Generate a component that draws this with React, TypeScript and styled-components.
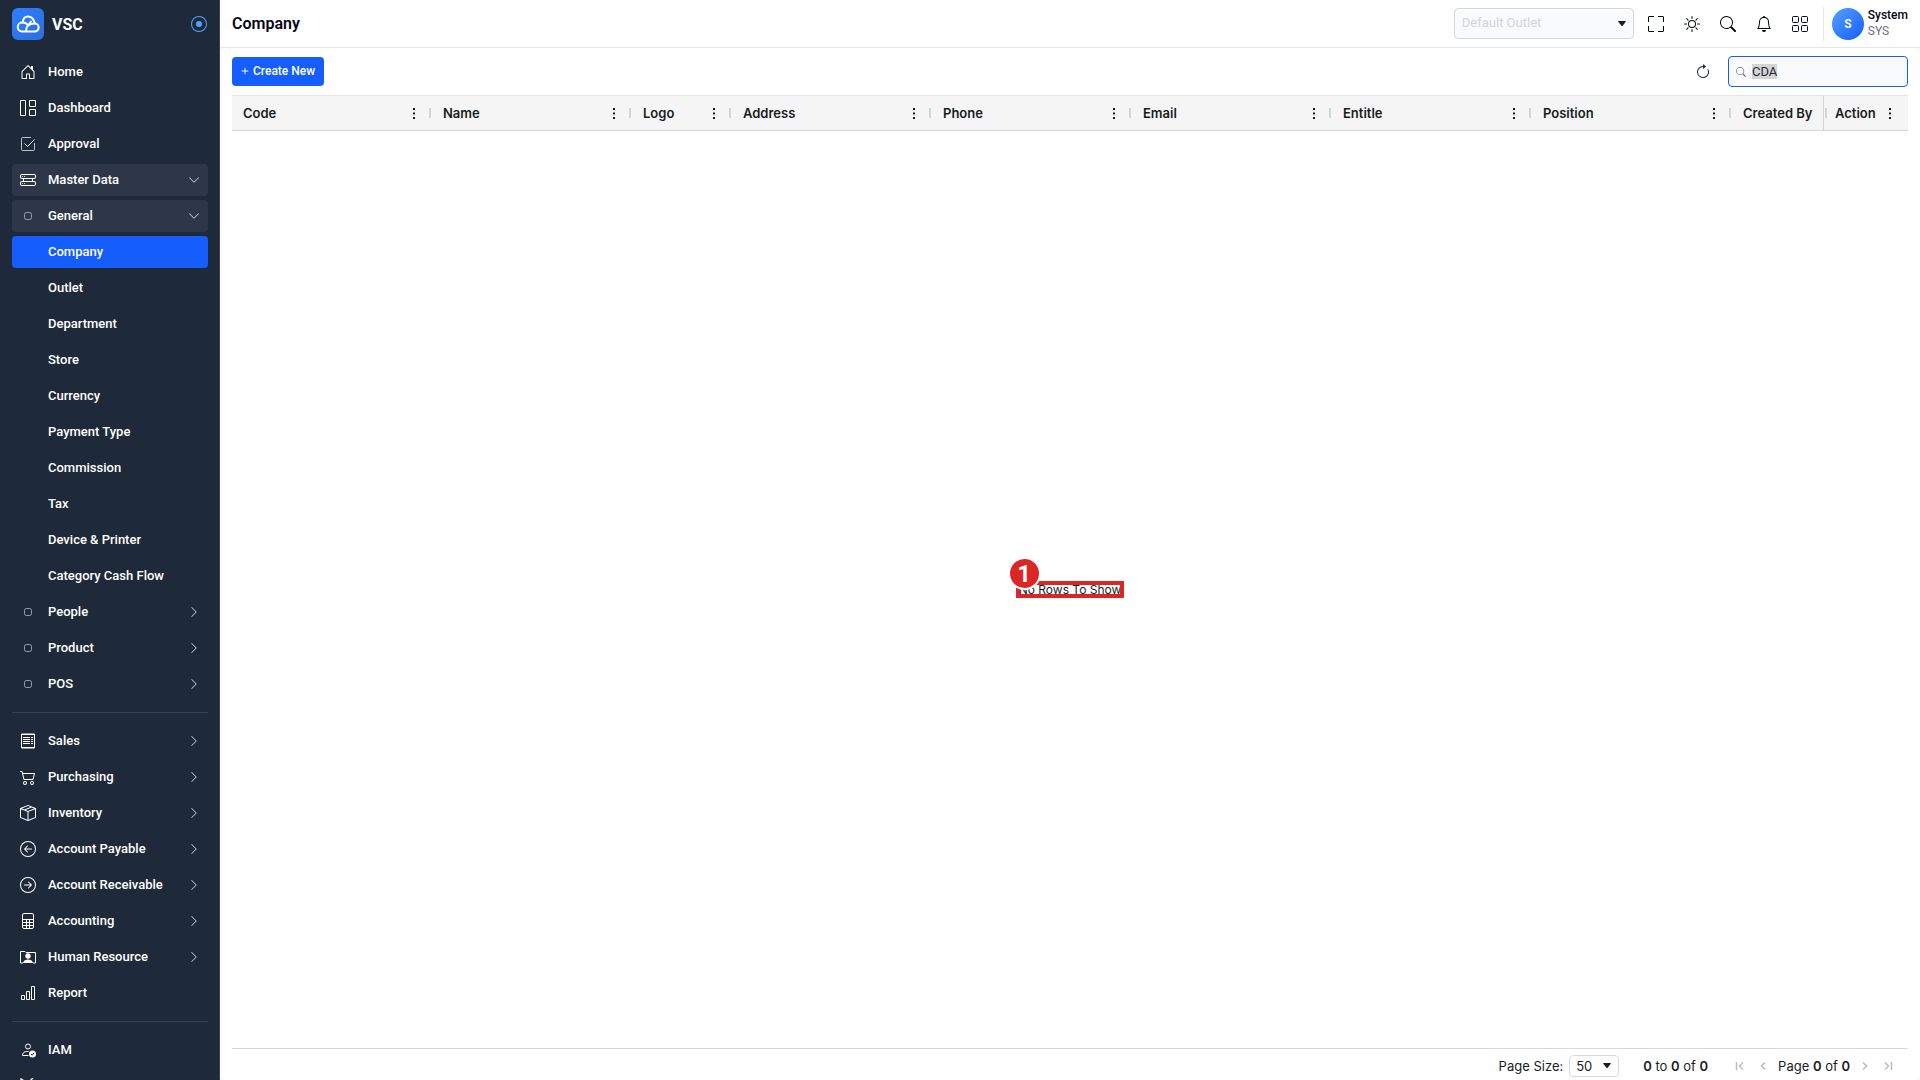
import React, { useEffect, useRef } from "react";
import styled, { createGlobalStyle } from "styled-components";
import {
  BsHouseDoor, BsHddRack, BsCart2, BsBoxSeam, BsArrowLeftCircle,
  BsArrowRightCircle, BsTools, BsChevronDown, BsChevronRight,
  BsSun, BsSearch, BsBell, BsArrowClockwise, BsRecordCircle, BsPlus,
} from "react-icons/bs";

const GlobalStyle = createGlobalStyle`
  *, *::before, *::after { box-sizing: border-box; }
  body { margin: 0; overflow: hidden; font-family: Roboto, sans-serif; font-size: 13px; color: #030712; }
  button, input, select { font: inherit; color: inherit; }
  button { border: 0; padding: 0; background: none; cursor: pointer; }
`;

const Shell = styled.div`
  display: flex;
  height: 100vh;
  background: #f3f4f6;
`;

/* Sidebar */
const Sidebar = styled.aside`
  flex: none;
  width: 220px;
  padding: 8px 11px 0 12px;
  background: #1e2939;
  border-right: 1px solid #364153;
  color: #fff;
  overflow: hidden;
`;
const Brand = styled.div`
  display: flex;
  align-items: center;
  height: 32px;
  margin-bottom: 16px;
`;
const LogoBox = styled.span`
  display: flex;
  align-items: center;
  justify-content: center;
  width: 32px;
  height: 32px;
  border-radius: 6px;
  background: linear-gradient(135deg, #2b7fff, #2f6fdc);
`;
const BrandName = styled.span`
  flex: 1;
  margin-left: 8px;
  font-size: 16px;
  font-weight: 700;
`;
const PinButton = styled.button`
  display: flex;
  margin-right: 1px;
  color: #51a2ff;
`;
const Menu = styled.ul`
  display: flex;
  flex-direction: column;
  gap: 4px;
  margin: 0;
  padding: 0;
  list-style: none;
`;
const MenuLink = styled.a<{ $state?: "open" | "active" }>`
  display: flex;
  align-items: center;
  height: 32px;
  padding: 0 8px;
  border-radius: 4px;
  color: #fff;
  font-weight: 500;
  text-decoration: none;
  background: ${(p) => (p.$state === "active" ? "#155dfc" : p.$state === "open" ? "#2d3748" : "transparent")};
`;
const IconSlot = styled.span`
  display: flex;
  align-items: center;
  justify-content: center;
  width: 16px;
  margin-right: 12px;
`;
const MenuLabel = styled.span`
  flex: 1;
  padding-bottom: 2px;
  white-space: nowrap;
`;
const Arrow = styled.span`
  display: flex;
  color: #d1d5dc;
`;
const Divider = styled.hr`
  height: 1px;
  margin: 12px 0;
  border: 0;
  background: #364153;
`;

/* Header */
const Page = styled.div`
  flex: 1;
  min-width: 0;
  display: flex;
  flex-direction: column;
`;
const Header = styled.header`
  display: flex;
  align-items: center;
  height: 48px;
  padding: 0 12px;
  background: #fff;
  border-bottom: 1px solid #e5e7eb;
`;
const Title = styled.h1`
  flex: 1;
  margin: 0;
  font-size: 16px;
  font-weight: 600;
`;
const SelectWrap = styled.div<{ $small?: boolean }>`
  display: grid;
  align-items: center;
  width: ${(p) => (p.$small ? 50 : 180)}px;
  & > * { grid-area: 1 / 1; }
  & > svg { justify-self: end; margin-right: 8px; pointer-events: none; }
`;
const OutletSelect = styled.select`
  appearance: none;
  width: 100%;
  height: 31px;
  padding: 0 7px 2px;
  border: 1px solid #d1d5dc;
  border-radius: 4px;
  background: #f9fafb;
  color: #d1d5dc;
  opacity: 1;
`;
const HeaderActions = styled.div`
  display: flex;
  gap: 20px;
  margin-left: 14px;
`;
const IconButton = styled.button`
  display: flex;
`;
const User = styled.div`
  display: flex;
  align-items: center;
  gap: 4px;
  margin-left: 15px;
  padding-left: 8px;
  border-left: 1px solid #e5e7eb;
`;
const Avatar = styled.span`
  display: flex;
  align-items: center;
  justify-content: center;
  width: 32px;
  height: 32px;
  border-radius: 50%;
  background: linear-gradient(135deg, #51a2ff, #155dfc);
  color: #fff;
  font-size: 12px;
  font-weight: 600;
`;
const UserText = styled.div`
  display: flex;
  flex-direction: column;
  padding-bottom: 2px;
  font-size: 12px;
  line-height: 16px;
`;
const UserName = styled.span`
  font-weight: 500;
`;
const UserRole = styled.span`
  color: #6a7282;
`;

/* Content */
const Content = styled.main`
  flex: 1;
  min-height: 0;
  display: flex;
  flex-direction: column;
  padding: 0 12px;
  border-radius: 4px;
  background: #fff;
`;
const Toolbar = styled.div`
  display: flex;
  align-items: center;
  justify-content: space-between;
  height: 47px;
`;
const CreateButton = styled.button`
  display: flex;
  align-items: center;
  gap: 1px;
  height: 29px;
  padding: 0 9px 1px 6px;
  border-radius: 4px;
  background: #155dfc;
  color: #fff;
  font-size: 12px;
  font-weight: 500;
`;
const ToolGroup = styled.div`
  display: flex;
  align-items: center;
  gap: 17px;
  color: #1e2939;
`;
const SearchBox = styled.label`
  display: flex;
  align-items: center;
  gap: 6px;
  width: 180px;
  height: 31px;
  padding: 0 7px;
  border: 1px solid #155dfc;
  border-radius: 4px;
  background: #f9fafb;
  color: #6a7282;
`;
const SearchInput = styled.input`
  flex: 1;
  min-width: 0;
  padding: 0;
  border: 0;
  outline: 0;
  background: transparent;
  color: #1e2939;
  &::selection { background: #d4d4d4; color: #1e2939; }
`;

/* Grid */
const Grid = styled.section`
  flex: 1;
  min-height: 0;
  display: flex;
  flex-direction: column;
  font-family: Inter, sans-serif;
  color: #181d1f;
`;
const Scroller = styled.div`
  overflow: hidden;
`;
const Table = styled.table`
  width: max-content;
  table-layout: fixed;
  border-collapse: separate;
  border-spacing: 0;
`;
const Th = styled.th<{ $width: number; $pinned?: boolean }>`
  position: ${(p) => (p.$pinned ? "sticky" : "static")};
  right: 0;
  width: ${(p) => p.$width}px;
  min-width: ${(p) => p.$width}px;
  height: 36px;
  padding: 0;
  border: solid #d5d5d5;
  border-width: 1px 0 1px ${(p) => (p.$pinned ? 1 : 0)}px;
  border-top-color: #e5e7eb;
  background: #f5f5f5;
  font-weight: 600;
  text-align: left;
`;
const ThInner = styled.div<{ $pinned?: boolean }>`
  display: flex;
  flex-direction: ${(p) => (p.$pinned ? "row-reverse" : "row")};
  align-items: center;
  padding: 0 ${(p) => (p.$pinned ? "16px 0 1px" : "1px 0 11px")};
`;
const ThLabel = styled.span`
  flex: 1;
`;
const Handle = styled.span<{ $pinned?: boolean }>`
  width: 2px;
  height: 10px;
  margin: ${(p) => (p.$pinned ? "0 8px 0 0" : "0 0 0 13px")};
  background: #d5d5d5;
`;
const Empty = styled.div`
  flex: 1;
  display: flex;
  align-items: center;
  justify-content: center;
`;
const EmptyText = styled.span`
  position: relative;
  padding: 0 3px;
  font-size: 12px;
  line-height: 17px;
`;
const Marker = styled.span`
  position: absolute;
  inset: 0;
  border: 4px solid #dc2626;
`;
const Badge = styled.span`
  position: absolute;
  left: -8px;
  top: -24px;
  display: flex;
  align-items: center;
  justify-content: center;
  width: 33px;
  height: 33px;
  border: 2px solid #fff;
  border-radius: 50%;
  background: #dc2626;
  color: #fff;
  font: bold 24px Roboto, sans-serif;
`;
const Pager = styled.footer`
  display: flex;
  align-items: center;
  justify-content: flex-end;
  height: 32px;
  padding: 2px 12px 0 0;
  border-top: 1px solid #d9d9d9;
  b { font-weight: 600; }
`;
const SizeLabel = styled.label`
  margin-right: 6px;
`;
const SizeSelect = styled.select`
  appearance: none;
  width: 100%;
  height: 22px;
  padding: 0 6px;
  border: 1px solid #d9d9d9;
  border-radius: 4px;
  background: #fff;
`;
const Summary = styled.span`
  margin: 0 24px;
`;
const PageButtons = styled.div`
  display: flex;
  align-items: center;
  gap: 7px;
  color: #b9bbbc;
`;
const PageText = styled.span`
  color: #181d1f;
`;

const Caret = () => (
  <svg width="8" height="5" viewBox="0 0 8 5" fill="#181d1f" aria-hidden="true">
    <path d="M.6 0h6.8q.8 0 .3.7L4.6 4.7q-.6.6-1.2 0L.3.7Q-.2 0 .6 0z" />
  </svg>
);

const LogoIcon = () => (
  <svg width="24" height="18" viewBox="0 0 24 18" fill="none" stroke="#fff" strokeWidth="2" strokeLinecap="round" strokeLinejoin="round">
    <path d="M6 16.500h12.500a4 4 0 0 0 .3-8C18 5 16.500 1.500 12 1.500 9 1.500 7 3.500 6.500 7.500a4.500 4.500 0 0 0-.5 9z" />
    <path d="M6.500 7.500c2.500-.2 4.500 1 5.500 3.200M10 16c0-4.500 3-7.500 8.500-7.500M12.300 10 15 6.500" />
  </svg>
);

const DashboardIcon = () => (
  <svg width="16" height="16" viewBox="0 0 16 16" fill="none" stroke="currentColor" strokeLinejoin="round">
    <path d="M.5.5h5v15h-5zM9.500.5h6v6h-6zM9.500 9.500h6v6h-6z" />
  </svg>
);
const ApprovalIcon = () => (
  <svg width="16" height="16" viewBox="0 0 16 16" fill="none" stroke="currentColor">
    <path d="M11 1.500H2.500q-1 0-1 1v11q0 1 1 1h11q1 0 1-1V7" strokeOpacity=".7" />
    <path d="m4.500 7.500 3 3 7-7" />
  </svg>
);
const SalesIcon = () => (
  <svg width="16" height="16" viewBox="0 0 16 16" fill="none" stroke="currentColor">
    <path d="M1.500 1v14h13V1zM1 1.500h14M1 14.500h14M3 4.500h7M3 6.500h7M3 8.500h7M3 10.500h7M11 4.500h2M11 6.500h2M11 8.500h2M11 10.500h2" />
  </svg>
);
const CalculatorIcon = () => (
  <svg width="16" height="16" viewBox="0 0 16 16" fill="none" stroke="currentColor">
    <rect x="2.500" y=".5" width="11" height="15" rx="1.500" />
    <path d="M2.500 6.500h11M2.500 9.500h11M2.500 12.500h11M6.500 6.500v9M9.500 6.500v9" />
  </svg>
);
const HumanIcon = () => (
  <svg width="16" height="16" viewBox="0 0 16 16" fill="currentColor">
    <circle cx="8" cy="7" r="2.700" />
    <path d="M3 14c.5-2.500 2.500-3.500 5-3.500s4.500 1 5 3.500z" />
    <path d="M3 14H.5V2.500H5l1 1h9.500V14H13" fill="none" stroke="currentColor" />
  </svg>
);
const ReportIcon = () => (
  <svg width="16" height="16" viewBox="0 0 16 16" fill="none" stroke="currentColor" strokeLinejoin="round">
    <path d="M1.500 10.500h3v4h-3zM6.500 6.500h3v8h-3zM11.500 1.500h3v13h-3z" />
  </svg>
);
const IamIcon = () => (
  <svg width="16" height="16" viewBox="0 0 16 16" fill="none" stroke="currentColor">
    <circle cx="8" cy="4.500" r="2.500" />
    <path d="M8.500 13.500H2.500c0-2.500 1.800-4 4-4h2" />
    <circle cx="12.500" cy="12" r="3.500" fill="currentColor" stroke="none" />
    <path d="m11 12 1.200 1.200 2-2.400" stroke="#1e2939" />
  </svg>
);
const DotIcon = () => (
  <svg width="8" height="8" viewBox="0 0 8 8" fill="none" stroke="#99a1af">
    <rect x=".5" y=".5" width="7" height="7" rx="2" />
  </svg>
);
const FullscreenIcon = () => (
  <svg width="16" height="16" viewBox="0 0 16 16" fill="none" stroke="currentColor">
    <path d="M.5 6V1q0-.5.5-.5h5M10 .5h5q.5 0 .5.5v5M15.500 10v5q0 .5-.5.5h-5M6 15.500H1q-.5 0-.5-.5v-5" />
  </svg>
);
const AppsIcon = () => (
  <svg width="16" height="16" viewBox="0 0 16 16" fill="none" stroke="currentColor">
    <rect x=".5" y=".5" width="6" height="6" rx="1" />
    <rect x="9.500" y=".5" width="6" height="6" rx="1" />
    <rect x=".5" y="9.500" width="6" height="6" rx="1" />
    <rect x="9.500" y="9.500" width="6" height="6" rx="1" />
  </svg>
);
const KebabIcon = () => (
  <svg width="3" height="11" viewBox="0 0 3 11" fill="#181d1f" aria-hidden="true">
    <path d="M0 0h2v2H0zM0 4.500h2v2H0zM0 9h2v2H0z" />
  </svg>
);
const PageIcon = ({ d }: { d: string }) => (
  <svg width="16" height="16" viewBox="0 0 16 16" fill="none" stroke="currentColor" strokeWidth="1.500">
    <path d={d} />
  </svg>
);

type Item = { label?: string; name?: string; icon?: React.ReactNode; arrow?: "right" | "down"; state?: "open" | "active" };

const groups: Item[][] = [
  [
    { label: "Home", icon: <BsHouseDoor size={16} /> },
    { label: "Dashboard", icon: <DashboardIcon /> },
    { label: "Approval", icon: <ApprovalIcon /> },
    { label: "Master Data", icon: <BsHddRack size={16} />, arrow: "down", state: "open" },
    { label: "General", icon: <DotIcon />, arrow: "down", state: "open" },
    { label: "Company", state: "active" },
    ...["Outlet", "Department", "Store", "Currency", "Payment Type", "Commission", "Tax", "Device & Printer", "Category Cash Flow"].map((label) => ({ label })),
    { label: "People", icon: <DotIcon />, arrow: "right" },
    { label: "Product", icon: <DotIcon />, arrow: "right" },
    { label: "POS", icon: <DotIcon />, arrow: "right" },
  ],
  [
    { label: "Sales", icon: <SalesIcon />, arrow: "right" },
    { label: "Purchasing", icon: <BsCart2 size={16} />, arrow: "right" },
    { label: "Inventory", icon: <BsBoxSeam size={16} />, arrow: "right" },
    { label: "Account Payable", icon: <BsArrowLeftCircle size={16} />, arrow: "right" },
    { label: "Account Receivable", icon: <BsArrowRightCircle size={16} />, arrow: "right" },
    { label: "Accounting", icon: <CalculatorIcon />, arrow: "right" },
    { label: "Human Resource", icon: <HumanIcon />, arrow: "right" },
    { label: "Report", icon: <ReportIcon /> },
  ],
  [
    { label: "IAM", icon: <IamIcon /> },
    { name: "Tools", icon: <BsTools size={16} /> },
  ],
];

const columns = [
  { label: "Code", width: 200 },
  { label: "Name", width: 200 },
  { label: "Logo", width: 100 },
  { label: "Address", width: 200 },
  { label: "Phone", width: 200 },
  { label: "Email", width: 200 },
  { label: "Entitle", width: 200 },
  { label: "Position", width: 200 },
  { label: "Created By", width: 200 },
];

export default function App() {
  const search = useRef<HTMLInputElement>(null);
  useEffect(() => {
    search.current?.focus();
    search.current?.select();
  }, []);

  return (
    <Shell>
      <GlobalStyle />
      <Sidebar>
        <Brand>
          <LogoBox><LogoIcon /></LogoBox>
          <BrandName>VSC</BrandName>
          <PinButton aria-label="Pin sidebar"><BsRecordCircle size={16} /></PinButton>
        </Brand>
        <nav>
          {groups.map((items, i) => (
            <React.Fragment key={i}>
              {i > 0 && <Divider />}
              <Menu>
                {items.map((item) => (
                  <li key={item.label ?? item.name}>
                    <MenuLink href="#" $state={item.state} aria-label={item.name}>
                      <IconSlot>{item.icon}</IconSlot>
                      <MenuLabel>{item.label}</MenuLabel>
                      {item.arrow && (
                        <Arrow>{item.arrow === "down" ? <BsChevronDown size={12} /> : <BsChevronRight size={12} />}</Arrow>
                      )}
                    </MenuLink>
                  </li>
                ))}
              </Menu>
            </React.Fragment>
          ))}
        </nav>
      </Sidebar>

      <Page>
        <Header>
          <Title>Company</Title>
          <SelectWrap>
            <OutletSelect aria-label="Outlet" disabled><option>Default Outlet</option></OutletSelect>
            <Caret />
          </SelectWrap>
          <HeaderActions>
            <IconButton aria-label="Full screen"><FullscreenIcon /></IconButton>
            <IconButton aria-label="Theme"><BsSun size={16} /></IconButton>
            <IconButton aria-label="Search"><BsSearch size={16} /></IconButton>
            <IconButton aria-label="Notifications"><BsBell size={16} /></IconButton>
            <IconButton aria-label="Apps"><AppsIcon /></IconButton>
          </HeaderActions>
          <User>
            <Avatar>S</Avatar>
            <UserText>
              <UserName>System</UserName>
              <UserRole>SYS</UserRole>
            </UserText>
          </User>
        </Header>

        <Content>
          <Toolbar>
            <CreateButton><BsPlus size={14} />Create New</CreateButton>
            <ToolGroup>
              <IconButton aria-label="Refresh"><BsArrowClockwise size={16} /></IconButton>
              <SearchBox>
                <BsSearch size={10} />
                <SearchInput ref={search} aria-label="Search companies" defaultValue="CDA" />
              </SearchBox>
            </ToolGroup>
          </Toolbar>

          <Grid>
            <Scroller>
              <Table>
                <thead>
                  <tr>
                    {columns.map((c) => (
                      <Th key={c.label} $width={c.width} scope="col">
                        <ThInner>
                          <ThLabel>{c.label}</ThLabel>
                          <KebabIcon />
                          <Handle />
                        </ThInner>
                      </Th>
                    ))}
                    <Th $width={85} $pinned scope="col">
                      <ThInner $pinned>
                        <KebabIcon />
                        <ThLabel>Action</ThLabel>
                        <Handle $pinned />
                      </ThInner>
                    </Th>
                  </tr>
                </thead>
              </Table>
            </Scroller>
            <Empty>
              <EmptyText>
                No Rows To Show
                <Marker />
                <Badge>1</Badge>
              </EmptyText>
            </Empty>
            <Pager>
              <SizeLabel htmlFor="page-size">Page Size:</SizeLabel>
              <SelectWrap $small>
                <SizeSelect id="page-size"><option>50</option></SizeSelect>
                <Caret />
              </SelectWrap>
              <Summary><b>0</b> to <b>0</b> of <b>0</b></Summary>
              <PageButtons>
                <IconButton aria-label="First page"><PageIcon d="M4.500 4v8M11 4.500 7.500 8l3.500 3.500" /></IconButton>
                <IconButton aria-label="Previous page"><PageIcon d="M10 4.500 6.500 8l3.500 3.500" /></IconButton>
                <PageText>Page <b>0</b> of <b>0</b></PageText>
                <IconButton aria-label="Next page"><PageIcon d="M6 4.500 9.500 8 6 11.500" /></IconButton>
                <IconButton aria-label="Last page"><PageIcon d="M11.500 4v8M5 4.500 8.500 8 5 11.500" /></IconButton>
              </PageButtons>
            </Pager>
          </Grid>
        </Content>
      </Page>
    </Shell>
  );
}
